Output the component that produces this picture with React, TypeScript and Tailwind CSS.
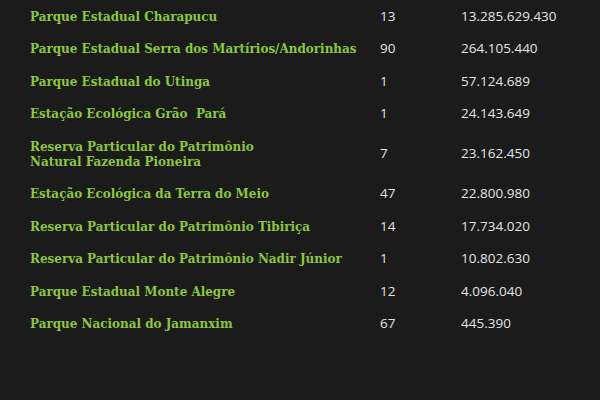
const ROWS: { name: string[]; count: string; area: string }[] = [
  { name: ['Parque Estadual Charapucu'], count: '13', area: '13.285.629.430' },
  { name: ['Parque Estadual Serra dos Martírios/Andorinhas'], count: '90', area: '264.105.440' },
  { name: ['Parque Estadual do Utinga'], count: '1', area: '57.124.689' },
  { name: ['Estação Ecológica Grão\u00a0 Pará'], count: '1', area: '24.143.649' },
  { name: ['Reserva Particular do Patrimônio', 'Natural Fazenda Pioneira'], count: '7', area: '23.162.450' },
  { name: ['Estação Ecológica da Terra do Meio'], count: '47', area: '22.800.980' },
  { name: ['Reserva Particular do Patrimônio Tibiriça'], count: '14', area: '17.734.020' },
  { name: ['Reserva Particular do Patrimônio Nadir Júnior'], count: '1', area: '10.802.630' },
  { name: ['Parque Estadual Monte Alegre'], count: '12', area: '4.096.040' },
  { name: ['Parque Nacional do Jamanxim'], count: '67', area: '445.390' },
];

export default function App() {
  return (
    <div className="h-[400px] w-[600px] overflow-hidden bg-[#1b1b1b] pl-[30px]">
      {ROWS.map((r) => (
        <div key={r.area} className="flex items-center py-[8.75px] leading-[15px]">
          <div className="w-[350px] font-['DejaVu_Serif',serif] font-stretch-condensed text-[13.3px] font-bold text-[#8dc641]">
            {r.name.map((l) => (
              <div key={l} className="whitespace-pre">{l}</div>
            ))}
          </div>
          <div className="w-[81px] font-['Open_Sans',sans-serif] text-[13.5px] text-[#e4e4e4]">{r.count}</div>
          <div className="font-['Open_Sans',sans-serif] text-[13.5px] text-[#e4e4e4]">{r.area}</div>
        </div>
      ))}
    </div>
  );
}
